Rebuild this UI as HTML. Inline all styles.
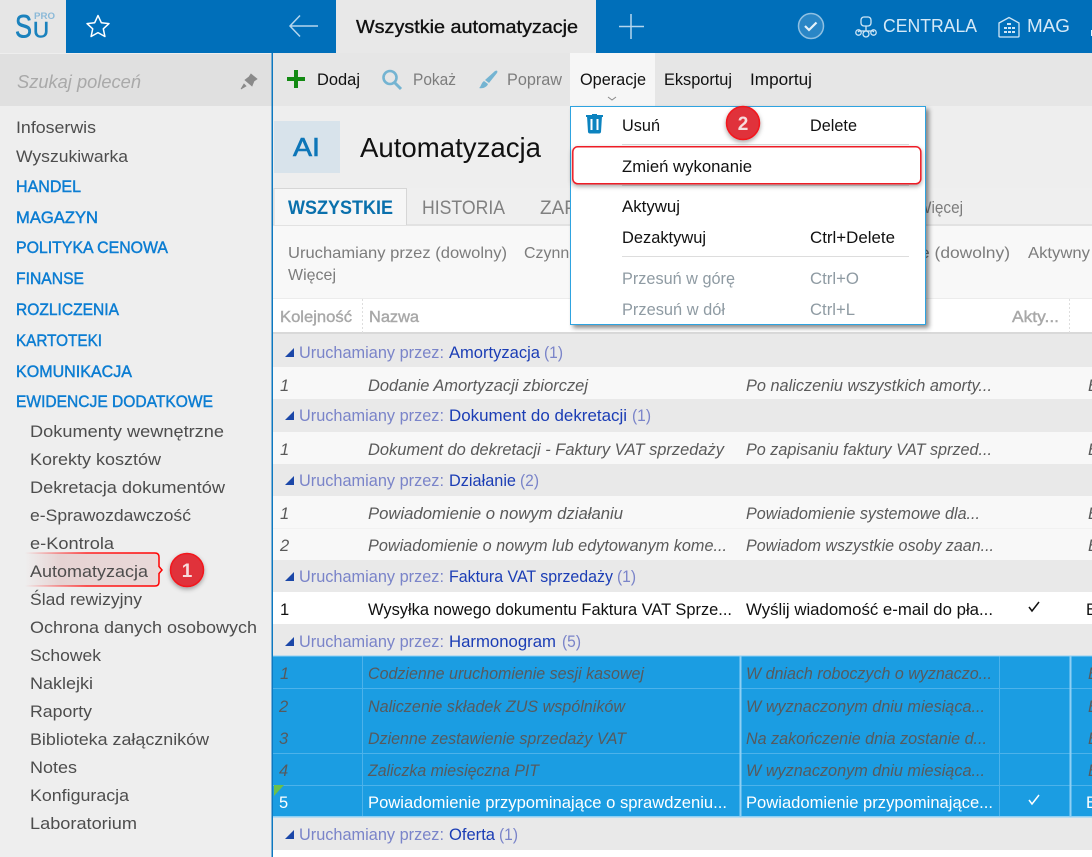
<!DOCTYPE html>
<html lang="pl"><head><meta charset="utf-8"><title>Automatyzacja</title>
<style>
html,body{margin:0;padding:0;width:1092px;height:857px;overflow:hidden;background:#eee}
svg{display:block}
text{font-family:"Liberation Sans",sans-serif;font-size:16px;fill:#222;white-space:pre}
.s{font-size:17px;fill:#4d4d4d}
.h{font-size:16.5px;fill:#0c7dd2;stroke:#0c7dd2;stroke-width:.45}
.t{font-size:16.5px;fill:#111}
.g{fill:#7d7d7d}
.d{fill:#8f9ba3}
.gh{fill:#7a84c9;font-size:16.5px}
.gn{fill:#1b3db5;font-size:16.5px}
.i{font-style:italic;fill:#5a5a5a;font-size:16.5px}
.b{fill:#111;font-size:16.5px}
.w{fill:#fff;font-size:16.5px}
.si{font-style:italic;fill:#565a5e;font-size:16.5px}
.f{fill:#7c7c7c;font-size:16px}
.c{fill:#a8a8a8;font-size:16px;stroke:#a8a8a8;stroke-width:.4}
</style></head><body>
<svg width="1092" height="857" viewBox="0 0 1092 857" xmlns="http://www.w3.org/2000/svg">
<defs>
<filter id="sh" x="-10%" y="-10%" width="125%" height="125%"><feDropShadow dx="3" dy="3" stdDeviation="2.5" flood-color="#000" flood-opacity=".45"/></filter>
<filter id="sc" x="-40%" y="-40%" width="180%" height="180%"><feDropShadow dx="0" dy="2" stdDeviation="2.5" flood-color="#000" flood-opacity=".35"/></filter>
<linearGradient id="pk" x1="0" x2="1" y1="0" y2="0"><stop offset="0" stop-color="#e9d5d5" stop-opacity="0"/><stop offset=".25" stop-color="#e6d3d3"/><stop offset="1" stop-color="#e9d9d9"/></linearGradient>
<linearGradient id="rl" x1="0" x2="1" y1="0" y2="0"><stop offset="0" stop-color="#f33" stop-opacity="0"/><stop offset=".45" stop-color="#f22"/><stop offset="1" stop-color="#f00"/></linearGradient>
</defs>

<!-- base -->
<rect width="1092" height="857" fill="#eeeeee"/>
<!-- top bar -->
<rect width="1092" height="53" fill="#006fba"/>
<rect width="66" height="53" fill="#e6e6e6"/>
<rect x="336" width="260" height="53" fill="#e8e8e8"/>
<text x="15" y="37.500" textLength="17" lengthAdjust="spacingAndGlyphs" style="font-size:32px;fill:#1b82bd;stroke:#1b82bd;stroke-width:.6">S</text>
<text x="33" y="37.500" textLength="16" lengthAdjust="spacingAndGlyphs" style="font-size:22px;fill:#1b82bd;stroke:#1b82bd;stroke-width:.6">U</text>
<text x="34" y="19" textLength="21" lengthAdjust="spacingAndGlyphs" style="font-size:9.5px;fill:#8bb9d8;font-weight:bold">PRO</text>
<path d="M98 15.500l3.300 7.200 7.700.9-5.700 5.200 1.600 7.700-6.900-3.900-6.900 3.900 1.600-7.700-5.700-5.200 7.700-.9z" fill="none" stroke="#fff" stroke-width="1.500" stroke-linejoin="round"/>
<path d="M318 26h-28M300 15.500L290 26l10 10.500" fill="none" stroke="#b4d6ee" stroke-width="1.500"/>
<text x="356" y="33" textLength="222" lengthAdjust="spacingAndGlyphs" style="font-size:18px;fill:#111;stroke:#111;stroke-width:.35">Wszystkie automatyzacje</text>
<path d="M631 14v25M619 26.500h25" stroke="#b4d6ee" stroke-width="1.500" fill="none"/>
<circle cx="811" cy="26" r="12.500" fill="#2a86c6" stroke="#8fc0e2" stroke-width="1.500"/>
<path d="M805 26l4 4 7.500-7.500" fill="none" stroke="#e6f2fa" stroke-width="2.200"/>
<g fill="none" stroke="#cfe6f6" stroke-width="1.300">
<rect x="861" y="17" width="10" height="9" rx="3"/><path d="M866 26v5M859 31h14M859 31l-1 1M873 31l1 1"/>
<circle cx="858.500" cy="32.500" r="2.700"/><circle cx="866" cy="34" r="3"/><circle cx="873.500" cy="32.500" r="2.700"/>
<path d="M999 23l10-5.500 10 5.500v13a1 1 0 0 1-1 1h-18a1 1 0 0 1-1-1z"/>
</g>
<g fill="#cfe6f6"><rect x="1007" y="23" width="4" height="2"/><rect x="1004" y="27" width="3" height="2"/><rect x="1008" y="27" width="3" height="2"/><rect x="1012" y="27" width="3" height="2"/><rect x="1004" y="31" width="3" height="2"/><rect x="1008" y="31" width="3" height="2"/><rect x="1012" y="31" width="3" height="2"/></g>
<text x="883" y="32" textLength="94" lengthAdjust="spacingAndGlyphs" style="font-size:18px;fill:#d5e9f7">CENTRALA</text>
<text x="1027" y="32" textLength="43" lengthAdjust="spacingAndGlyphs" style="font-size:18px;fill:#d5e9f7">MAG</text>
<rect x="1091" y="30" width="1" height="6" fill="#e6f2fa"/>

<!-- sidebar -->
<rect y="53" width="272" height="53" fill="#e0e0e0"/>
<rect y="53" width="272" height="1" fill="#eee"/>
<text x="17" y="88" textLength="124" lengthAdjust="spacingAndGlyphs" style="font-size:18px;font-style:italic;fill:#a9a9a9">Szukaj poleceń</text>
<path d="M251 74l6 5-3 2-2 5-7-6 4-3zM244 84l-3 5 5-3z" fill="#8a8a8a" stroke="#8a8a8a" stroke-width=".8"/>
<text class="s" x="16" y="133" textLength="80" lengthAdjust="spacingAndGlyphs">Infoserwis</text>
<text class="s" x="16" y="162" textLength="112" lengthAdjust="spacingAndGlyphs">Wyszukiwarka</text>
<text class="h" x="16" y="192" textLength="65" lengthAdjust="spacingAndGlyphs">HANDEL</text>
<text class="h" x="16" y="223" textLength="82" lengthAdjust="spacingAndGlyphs">MAGAZYN</text>
<text class="h" x="16" y="253" textLength="152" lengthAdjust="spacingAndGlyphs">POLITYKA CENOWA</text>
<text class="h" x="16" y="284" textLength="68" lengthAdjust="spacingAndGlyphs">FINANSE</text>
<text class="h" x="16" y="315" textLength="103" lengthAdjust="spacingAndGlyphs">ROZLICZENIA</text>
<text class="h" x="16" y="346" textLength="86" lengthAdjust="spacingAndGlyphs">KARTOTEKI</text>
<text class="h" x="16" y="377" textLength="116" lengthAdjust="spacingAndGlyphs">KOMUNIKACJA</text>
<text class="h" x="16" y="407" textLength="197" lengthAdjust="spacingAndGlyphs">EWIDENCJE DODATKOWE</text>
<text class="s" x="30" y="437" textLength="194" lengthAdjust="spacingAndGlyphs">Dokumenty wewnętrzne</text>
<text class="s" x="30" y="465" textLength="131" lengthAdjust="spacingAndGlyphs">Korekty kosztów</text>
<text class="s" x="30" y="493" textLength="195" lengthAdjust="spacingAndGlyphs">Dekretacja dokumentów</text>
<text class="s" x="30" y="521" textLength="161" lengthAdjust="spacingAndGlyphs">e-Sprawozdawczość</text>
<text class="s" x="30" y="549" textLength="84" lengthAdjust="spacingAndGlyphs">e-Kontrola</text>
<path d="M25 553H155q4 0 4 4v9.500l3 3.500-3 3.500V582q0 4-4 4H25z" fill="url(#pk)"/>
<path d="M25 553H155q4 0 4 4v9.500l3 3.500-3 3.500V582q0 4-4 4H25" fill="none" stroke="url(#rl)" stroke-width="1.500"/>
<text class="s" x="30" y="577" textLength="118" lengthAdjust="spacingAndGlyphs">Automatyzacja</text>
<text class="s" x="30" y="605" textLength="112" lengthAdjust="spacingAndGlyphs">Ślad rewizyjny</text>
<text class="s" x="30" y="633" textLength="227" lengthAdjust="spacingAndGlyphs">Ochrona danych osobowych</text>
<text class="s" x="30" y="661" textLength="71" lengthAdjust="spacingAndGlyphs">Schowek</text>
<text class="s" x="30" y="689" textLength="63" lengthAdjust="spacingAndGlyphs">Naklejki</text>
<text class="s" x="30" y="717" textLength="62" lengthAdjust="spacingAndGlyphs">Raporty</text>
<text class="s" x="30" y="745" textLength="179" lengthAdjust="spacingAndGlyphs">Biblioteka załączników</text>
<text class="s" x="30" y="773" textLength="47" lengthAdjust="spacingAndGlyphs">Notes</text>
<text class="s" x="30" y="801" textLength="99" lengthAdjust="spacingAndGlyphs">Konfiguracja</text>
<text class="s" x="30" y="829" textLength="107" lengthAdjust="spacingAndGlyphs">Laboratorium</text>
<g filter="url(#sc)"><circle cx="187" cy="570" r="16.500" fill="#e0333a" stroke="#f2141c" stroke-width="1.500"/></g>
<text x="187" y="577" text-anchor="middle" style="font-size:19px;font-weight:bold;fill:#f6dcdc">1</text>

<!-- main -->
<rect x="271.500" y="53" width="1.500" height="804" fill="#0d78c0"/>
<rect x="273" y="53" width="819" height="53" fill="#e6e6e6"/>
<path d="M287 79h18M296 70v18" stroke="#138a13" stroke-width="4" fill="none"/>
<text class="t" x="317" y="85" textLength="43" lengthAdjust="spacingAndGlyphs">Dodaj</text>
<circle cx="390" cy="77.500" r="6.500" fill="none" stroke="#74b4d2" stroke-width="2.600"/><path d="M395 83l6 6" stroke="#74b4d2" stroke-width="3"/>
<path d="M495 71c2-1 3 0 2 2l-8 10-4-3z" fill="#74b4d2"/><path d="M484 81l4 3c-1 3-5 5-9 4 2-1 2-5 5-7z" fill="#74b4d2"/>
<text class="g" x="413" y="85" textLength="43" lengthAdjust="spacingAndGlyphs" style="font-size:16.500px">Pokaż</text>
<text class="g" x="507" y="85" textLength="55" lengthAdjust="spacingAndGlyphs" style="font-size:16.500px">Popraw</text>
<rect x="570" y="53" width="85" height="53" fill="#f6f6f6"/>
<text class="t" x="580" y="85" textLength="66" lengthAdjust="spacingAndGlyphs">Operacje</text>
<path d="M608 97l4 3 4-3" fill="none" stroke="#888"/>
<text class="t" x="664" y="85" textLength="68" lengthAdjust="spacingAndGlyphs">Eksportuj</text>
<text class="t" x="750" y="85" textLength="62" lengthAdjust="spacingAndGlyphs">Importuj</text>

<rect x="274" y="121" width="66" height="52" fill="#d8e3eb"/>
<text x="293" y="156" textLength="27" lengthAdjust="spacingAndGlyphs" style="font-size:26px;fill:#0d76b8;stroke:#0d76b8;stroke-width:.6">AI</text>
<text x="360" y="157" textLength="181" lengthAdjust="spacingAndGlyphs" style="font-size:28px;fill:#111">Automatyzacja</text>

<rect x="273" y="188" width="819" height="37" fill="#efefef"/>
<rect x="273" y="224.500" width="819" height="1" fill="#d6d6d6"/>
<path d="M274 225V188.500H406.500V225" fill="#f6f6f6" stroke="#d6d6d6"/>
<text x="288" y="214" textLength="105" lengthAdjust="spacingAndGlyphs" style="font-size:19px;font-weight:bold;fill:#0a70ac">WSZYSTKIE</text>
<text x="422" y="214" textLength="83" lengthAdjust="spacingAndGlyphs" style="font-size:19px;fill:#808080">HISTORIA</text>
<text x="540" y="214" textLength="60" lengthAdjust="spacingAndGlyphs" style="font-size:19px;fill:#808080">ZAPLA</text>
<text x="917" y="213" textLength="46" lengthAdjust="spacingAndGlyphs" style="font-size:17px;fill:#7c7c7c">Więcej</text>

<rect x="273" y="226" width="819" height="72" fill="#f8f8f8"/>
<text class="f" x="288" y="258" textLength="219" lengthAdjust="spacingAndGlyphs">Uruchamiany przez (dowolny)</text>
<text class="f" x="524" y="258" textLength="70" lengthAdjust="spacingAndGlyphs">Czynność</text>
<text class="f" x="920" y="258" textLength="90" lengthAdjust="spacingAndGlyphs">e (dowolny)</text>
<text class="f" x="1028" y="258" textLength="62" lengthAdjust="spacingAndGlyphs">Aktywny</text>
<text class="f" x="288" y="280" textLength="48" lengthAdjust="spacingAndGlyphs">Więcej</text>

<rect x="273" y="298" width="819" height="35" fill="#fff"/>
<rect x="273" y="298" width="819" height="1" fill="#ececec"/>
<rect x="273" y="332" width="819" height="2" fill="#d9d9d9"/>
<text class="c" x="280" y="322" textLength="72" lengthAdjust="spacingAndGlyphs">Kolejność</text>
<text class="c" x="369" y="322" textLength="50" lengthAdjust="spacingAndGlyphs">Nazwa</text>
<text class="c" x="1012" y="322" textLength="47" lengthAdjust="spacingAndGlyphs">Akty...</text>
<path d="M362.500 299v34M1069.500 299v34" stroke="#dedede" stroke-dasharray="2 2"/>

<!-- rows -->
<rect x="273" y="334" width="819" height="33" fill="#e9e9e9"/>
<rect x="273" y="367" width="819" height="32" fill="#f8f8f8"/>
<rect x="273" y="399" width="819" height="33" fill="#e9e9e9"/>
<rect x="273" y="432" width="819" height="32" fill="#f8f8f8"/>
<rect x="273" y="464" width="819" height="32" fill="#e9e9e9"/>
<rect x="273" y="496" width="819" height="64" fill="#f8f8f8"/>
<rect x="273" y="528" width="819" height="1" fill="#f1f1f1"/>
<rect x="273" y="560" width="819" height="32" fill="#e9e9e9"/>
<rect x="273" y="592" width="819" height="32" fill="#fff"/>
<rect x="273" y="624" width="819" height="32" fill="#e9e9e9"/>
<rect x="273" y="656" width="819" height="161" fill="#1b9de2"/>
<rect x="273" y="817" width="819" height="33" fill="#e9e9e9"/>
<rect x="273" y="850" width="819" height="7" fill="#fff"/>
<g fill="#4cb2ea"><rect x="273" y="688" width="819" height="1"/><rect x="273" y="753" width="819" height="1"/><rect x="273" y="785" width="819" height="1"/><rect x="362" y="656" width="1" height="161"/><rect x="999" y="656" width="1" height="161"/></g>
<g fill="#8fd0f4"><rect x="739.500" y="656" width="2" height="161"/><rect x="1069.500" y="656" width="2" height="161"/><rect x="273" y="816" width="819" height="1.500"/><rect x="273" y="655.500" width="819" height="1"/></g>
<path d="M274 785h10l-10 11z" fill="#6cc04a"/>

<!-- group headers -->
<g fill="#1b47a8">
<path d="M285 357l9-9v9z"/><path d="M285 420l9-9v9z"/><path d="M285 485l9-9v9z"/><path d="M285 581l9-9v9z"/><path d="M285 646l9-9v9z"/><path d="M285 839l9-9v9z"/>
</g>
<text class="gh" x="299" y="358" textLength="145" lengthAdjust="spacingAndGlyphs">Uruchamiany przez:</text><text class="gn" x="449" y="358" textLength="91" lengthAdjust="spacingAndGlyphs">Amortyzacja</text><text class="gh" x="544" y="358" textLength="19" lengthAdjust="spacingAndGlyphs">(1)</text>
<text class="gh" x="299" y="421" textLength="145" lengthAdjust="spacingAndGlyphs">Uruchamiany przez:</text><text class="gn" x="449" y="421" textLength="178" lengthAdjust="spacingAndGlyphs">Dokument do dekretacji</text><text class="gh" x="632" y="421" textLength="19" lengthAdjust="spacingAndGlyphs">(1)</text>
<text class="gh" x="299" y="486" textLength="145" lengthAdjust="spacingAndGlyphs">Uruchamiany przez:</text><text class="gn" x="449" y="486" textLength="67" lengthAdjust="spacingAndGlyphs">Działanie</text><text class="gh" x="520" y="486" textLength="19" lengthAdjust="spacingAndGlyphs">(2)</text>
<text class="gh" x="299" y="582" textLength="145" lengthAdjust="spacingAndGlyphs">Uruchamiany przez:</text><text class="gn" x="449" y="582" textLength="164" lengthAdjust="spacingAndGlyphs">Faktura VAT sprzedaży</text><text class="gh" x="617" y="582" textLength="19" lengthAdjust="spacingAndGlyphs">(1)</text>
<text class="gh" x="299" y="647" textLength="145" lengthAdjust="spacingAndGlyphs">Uruchamiany przez:</text><text class="gn" x="449" y="647" textLength="107" lengthAdjust="spacingAndGlyphs">Harmonogram</text><text class="gh" x="562" y="647" textLength="19" lengthAdjust="spacingAndGlyphs">(5)</text>
<text class="gh" x="299" y="840" textLength="145" lengthAdjust="spacingAndGlyphs">Uruchamiany przez:</text><text class="gn" x="449" y="840" textLength="46" lengthAdjust="spacingAndGlyphs">Oferta</text><text class="gh" x="499" y="840" textLength="19" lengthAdjust="spacingAndGlyphs">(1)</text>

<!-- row text -->
<text class="i" x="280" y="391">1</text><text class="i" x="368" y="391" textLength="220" lengthAdjust="spacingAndGlyphs">Dodanie Amortyzacji zbiorczej</text><text class="i" x="746" y="391" textLength="246" lengthAdjust="spacingAndGlyphs">Po naliczeniu wszystkich amorty...</text><text class="i" x="1088" y="391">B</text>
<text class="i" x="280" y="455">1</text><text class="i" x="368" y="455" textLength="356" lengthAdjust="spacingAndGlyphs">Dokument do dekretacji - Faktury VAT sprzedaży</text><text class="i" x="746" y="455" textLength="246" lengthAdjust="spacingAndGlyphs">Po zapisaniu faktury VAT sprzed...</text><text class="i" x="1088" y="455">B</text>
<text class="i" x="280" y="519">1</text><text class="i" x="368" y="519" textLength="255" lengthAdjust="spacingAndGlyphs">Powiadomienie o nowym działaniu</text><text class="i" x="746" y="519" textLength="234" lengthAdjust="spacingAndGlyphs">Powiadomienie systemowe dla...</text><text class="i" x="1088" y="519">B</text>
<text class="i" x="280" y="551">2</text><text class="i" x="368" y="551" textLength="359" lengthAdjust="spacingAndGlyphs">Powiadomienie o nowym lub edytowanym kome...</text><text class="i" x="746" y="551" textLength="248" lengthAdjust="spacingAndGlyphs">Powiadom wszystkie osoby zaan...</text><text class="i" x="1088" y="551">B</text>
<text class="b" x="280" y="615">1</text><text class="b" x="368" y="615" textLength="364" lengthAdjust="spacingAndGlyphs">Wysyłka nowego dokumentu Faktura VAT Sprze...</text><text class="b" x="746" y="615" textLength="247" lengthAdjust="spacingAndGlyphs">Wyślij wiadomość e-mail do pła...</text><path d="M1029 607l3 4 7-9" fill="none" stroke="#111" stroke-width="1.500"/><text class="b" x="1086" y="615">B</text>
<text class="si" x="280" y="679">1</text><text class="si" x="368" y="679" textLength="276" lengthAdjust="spacingAndGlyphs">Codzienne uruchomienie sesji kasowej</text><text class="si" x="746" y="679" textLength="246" lengthAdjust="spacingAndGlyphs">W dniach roboczych o wyznaczo...</text><text class="si" x="1088" y="679">B</text>
<text class="si" x="279" y="712">2</text><text class="si" x="368" y="712" textLength="257" lengthAdjust="spacingAndGlyphs">Naliczenie składek ZUS wspólników</text><text class="si" x="746" y="712" textLength="239" lengthAdjust="spacingAndGlyphs">W wyznaczonym dniu miesiąca...</text><text class="si" x="1088" y="712">B</text>
<text class="si" x="279" y="744">3</text><text class="si" x="368" y="744" textLength="258" lengthAdjust="spacingAndGlyphs">Dzienne zestawienie sprzedaży VAT</text><text class="si" x="746" y="744" textLength="241" lengthAdjust="spacingAndGlyphs">Na zakończenie dnia zostanie d...</text><text class="si" x="1088" y="744">B</text>
<text class="si" x="279" y="776">4</text><text class="si" x="368" y="776" textLength="171" lengthAdjust="spacingAndGlyphs">Zaliczka miesięczna PIT</text><text class="si" x="746" y="776" textLength="239" lengthAdjust="spacingAndGlyphs">W wyznaczonym dniu miesiąca...</text><text class="si" x="1088" y="776">B</text>
<text class="w" x="279" y="808">5</text><text class="w" x="368" y="808" textLength="359" lengthAdjust="spacingAndGlyphs">Powiadomienie przypominające o sprawdzeniu...</text><text class="w" x="746" y="808" textLength="247" lengthAdjust="spacingAndGlyphs">Powiadomienie przypominające...</text><path d="M1029 800l3 4 7-9" fill="none" stroke="#fff" stroke-width="1.500"/><text class="w" x="1086" y="808">B</text>

<!-- dropdown -->
<rect x="570.500" y="106.500" width="355" height="218" fill="#fff" stroke="#2ea3e0" filter="url(#sh)"/>
<path d="M587 116h15l-1 16a2 2 0 0 1-2 1.500h-9a2 2 0 0 1-2-1.500z" fill="#0c83bf"/><rect x="586" y="115" width="17" height="2" fill="#0c83bf"/><rect x="592" y="114" width="5" height="2" fill="#0c83bf"/><rect x="590.500" y="119" width="2" height="11" fill="#fff"/><rect x="596.500" y="119" width="2" height="11" fill="#fff"/>
<text class="t" x="622" y="131" textLength="38" lengthAdjust="spacingAndGlyphs">Usuń</text>
<text class="t" x="810" y="131" textLength="47" lengthAdjust="spacingAndGlyphs">Delete</text>
<rect x="622" y="144" width="287" height="1" fill="#ddd"/>
<rect x="622" y="185" width="287" height="1" fill="#ddd"/>
<rect x="622" y="256" width="287" height="1" fill="#ddd"/>
<g filter="url(#sc)"><rect x="572.800" y="146.800" width="348" height="37" rx="5" fill="#fff" stroke="#ee1c25" stroke-width="1.500"/></g>
<text class="t" x="622" y="172" textLength="130" lengthAdjust="spacingAndGlyphs">Zmień wykonanie</text>
<text class="t" x="622" y="212" textLength="58" lengthAdjust="spacingAndGlyphs">Aktywuj</text>
<text class="t" x="622" y="243" textLength="84" lengthAdjust="spacingAndGlyphs">Dezaktywuj</text>
<text class="t" x="810" y="243" textLength="85" lengthAdjust="spacingAndGlyphs">Ctrl+Delete</text>
<text class="d" x="622" y="284" textLength="113" lengthAdjust="spacingAndGlyphs" style="font-size:16.500px">Przesuń w górę</text>
<text class="d" x="810" y="284" textLength="49" lengthAdjust="spacingAndGlyphs" style="font-size:16.500px">Ctrl+O</text>
<text class="d" x="622" y="315" textLength="103" lengthAdjust="spacingAndGlyphs" style="font-size:16.500px">Przesuń w dół</text>
<text class="d" x="810" y="315" textLength="45" lengthAdjust="spacingAndGlyphs" style="font-size:16.500px">Ctrl+L</text>
<g filter="url(#sc)"><circle cx="743" cy="123" r="16.500" fill="#e0333a" stroke="#f2141c" stroke-width="1.500"/></g>
<text x="743" y="130" text-anchor="middle" style="font-size:19px;font-weight:bold;fill:#f6dcdc">2</text>
</svg>
</body></html>
